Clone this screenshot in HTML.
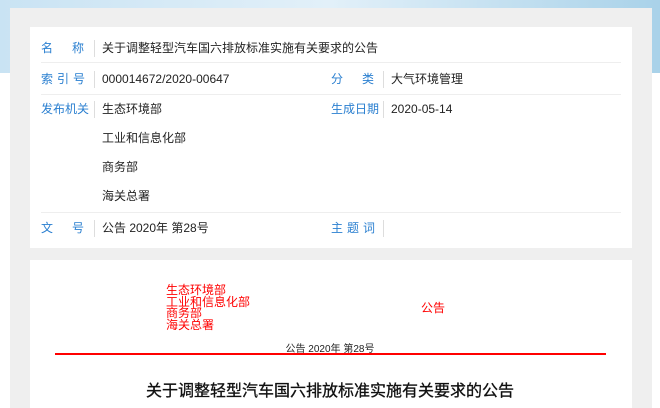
<!DOCTYPE html>
<html><head><meta charset="utf-8"><style>
*{margin:0;padding:0;box-sizing:border-box}
body{width:660px;height:408px;overflow:hidden;position:relative;font-family:"Liberation Sans","Noto Sans CJK SC",sans-serif;font-size:12px;background:#fff}
.bg{position:absolute;left:0;top:0;width:660px;height:73px;background:linear-gradient(90deg,#c9e3f3,#e2f0f9 50%,#a9d2e9)}
.card{position:absolute;background:#fff}
.lab{position:absolute;color:#2a7fd0;font-size:12px;line-height:17px}
.val{position:absolute;color:#222;font-size:12px;line-height:17px}
.sep{position:absolute;width:1px;height:17px;background:#ddd}
.hr{position:absolute;left:41px;width:580px;height:1px;background:#eee}
.red{position:absolute;color:#f00;font-size:12px;line-height:11.5px}
</style></head><body>
<div class="bg"></div>
<div style="position:absolute;left:10px;top:8px;height:400px;width:642px;background:#efefef"></div>
<div class="card" style="left:30px;top:27px;width:602px;height:221px"></div>
<div class="card" style="left:30px;top:260px;width:602px;height:148px"></div>

<div class="lab" style="left:41px;top:40px">名</div><div class="lab" style="left:72px;top:40px">称</div>
<div class="sep" style="left:94px;top:40px"></div>
<div class="val" style="left:102px;top:40px">关于调整轻型汽车国六排放标准实施有关要求的公告</div>
<div class="hr" style="top:62px"></div>

<div class="lab" style="left:41px;top:71px;letter-spacing:4px">索引号</div>
<div class="sep" style="left:94px;top:71px"></div>
<div class="val" style="left:102px;top:71px">000014672/2020-00647</div>
<div class="lab" style="left:331px;top:71px">分</div><div class="lab" style="left:362px;top:71px">类</div>
<div class="sep" style="left:383px;top:71px"></div>
<div class="val" style="left:391px;top:71px">大气环境管理</div>
<div class="hr" style="top:94px"></div>

<div class="lab" style="left:41px;top:101px">发布机关</div>
<div class="sep" style="left:94px;top:101px"></div>
<div class="val" style="left:102px;top:101px">生态环境部</div>
<div class="val" style="left:102px;top:130px">工业和信息化部</div>
<div class="val" style="left:102px;top:159px">商务部</div>
<div class="val" style="left:102px;top:188px">海关总署</div>
<div class="lab" style="left:331px;top:101px">生成日期</div>
<div class="sep" style="left:383px;top:101px"></div>
<div class="val" style="left:391px;top:101px">2020-05-14</div>
<div class="hr" style="top:212px"></div>

<div class="lab" style="left:41px;top:220px">文</div><div class="lab" style="left:72px;top:220px">号</div>
<div class="sep" style="left:94px;top:220px"></div>
<div class="val" style="left:102px;top:220px">公告 2020年 第28号</div>
<div class="lab" style="left:331px;top:220px;letter-spacing:4px">主题词</div>
<div class="sep" style="left:383px;top:220px"></div>

<div class="red" style="left:166px;top:285px">生态环境部<br>工业和信息化部<br>商务部<br>海关总署</div>
<div class="red" style="left:421px;top:303px">公告</div>
<div style="position:absolute;left:0;width:660px;top:340px;text-align:center;font-size:10px;color:#222">公告 2020年 第28号</div>
<div style="position:absolute;left:55px;top:353px;width:551px;height:2px;background:#f00"></div>
<div style="position:absolute;left:0;width:660px;top:377px;text-align:center;font-size:16px;color:#111;-webkit-text-stroke:0.3px #111">关于调整轻型汽车国六排放标准实施有关要求的公告</div>
</body></html>
